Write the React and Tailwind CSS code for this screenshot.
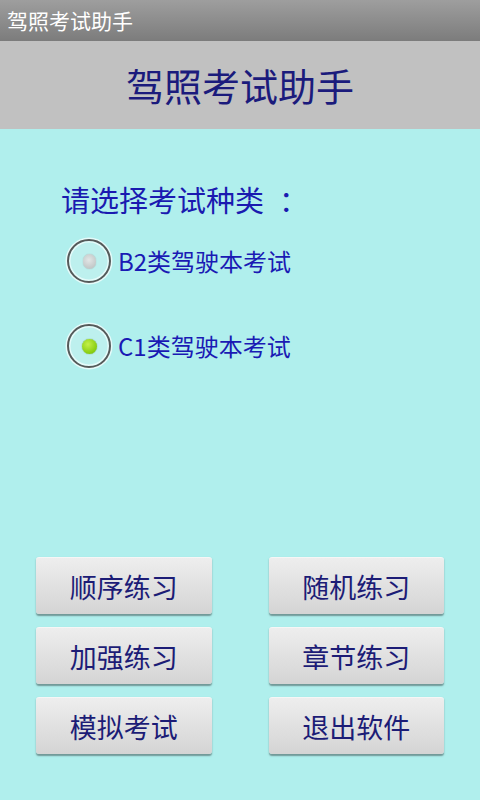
import React, { useState } from "react";

const font = { fontFamily: '"Noto Sans CJK SC", "Noto Sans", sans-serif' };

function Radio({ checked, label, onClick, className }) {
  return (
    <div className={"flex items-center cursor-pointer " + className} onClick={onClick}>
      <div className="w-[44px] h-[44px] rounded-full border-[2.5px] border-[#565a5a] bg-[#bdf0ee] shadow-[0_0_0_1.5px_#e6fbfa,inset_0_0_0_1.5px_#e6fbfa] flex items-center justify-center">
        {checked ? (
          <div className="w-[15px] h-[15px] rounded-full bg-[radial-gradient(circle_at_40%_35%,#c4f04a,#86cc10_70%,#6aa80a)] shadow-[0_0_1px_#4a7a00]" />
        ) : (
          <div className="w-[13px] h-[15px] rounded-full bg-[radial-gradient(circle_at_45%_40%,#e2e6e6,#b6bcbc)] shadow-[0_0_1px_#9aa]" />
        )}
      </div>
      <span className="ml-[7px] text-[24px] leading-none text-[#1a1ab4]">{label}</span>
    </div>
  );
}

function Btn({ children }) {
  return (
    <button className="h-[57px] rounded-[3px] bg-[linear-gradient(to_bottom,#eeeeee,#d4d4d4)] shadow-[0_1.5px_1.5px_rgba(60,80,80,0.55)] border-t border-[#f6f6f6] text-[27px] leading-none text-[#1c1c76] flex items-center justify-center">
      {children}
    </button>
  );
}

export default function App() {
  const [sel, setSel] = useState("C1");
  return (
    <div style={font} className="w-[480px] h-[800px] flex flex-col overflow-hidden">
      <div className="h-[41px] shrink-0 bg-[linear-gradient(to_bottom,#9e9e9e,#7c7c7c)] flex items-center pl-[7px]">
        <span className="text-white text-[21px] leading-none">驾照考试助手</span>
      </div>
      <div className="h-[88px] shrink-0 bg-[#c1c1c1] flex items-center justify-center">
        <span className="text-[38px] leading-none text-[#1b1b7c]">驾照考试助手</span>
      </div>
      <div className="flex-1 bg-[#b0efed] flex flex-col">
        <div className="mt-[56px] pl-[61px] text-[29px] leading-none text-[#1a1ab0]">
          请选择考试种类<span className="inline-block ml-[15px]">：</span>
        </div>
        <Radio
          className="mt-[25px] pl-[67px]"
          checked={sel === "B2"}
          label="B2类驾驶本考试"
          onClick={() => setSel("B2")}
        />
        <Radio
          className="mt-[41px] pl-[67px]"
          checked={sel === "C1"}
          label="C1类驾驶本考试"
          onClick={() => setSel("C1")}
        />
        <div className="flex-1" />
        <div className="grid grid-cols-2 gap-x-[57px] gap-y-[13px] px-[36px] pb-[46px]">
          <Btn>顺序练习</Btn>
          <Btn>随机练习</Btn>
          <Btn>加强练习</Btn>
          <Btn>章节练习</Btn>
          <Btn>模拟考试</Btn>
          <Btn>退出软件</Btn>
        </div>
      </div>
    </div>
  );
}
